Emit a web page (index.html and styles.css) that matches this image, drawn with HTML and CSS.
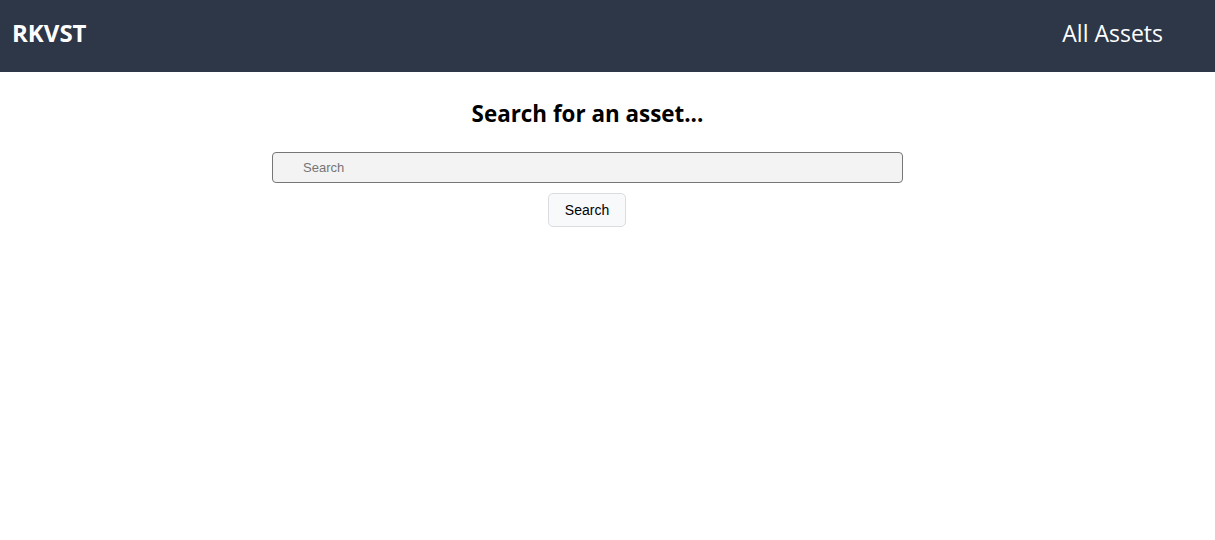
FILE: index.html
```html
<!DOCTYPE html>
<html lang="en">
<head>
<meta charset="utf-8">
<title>RKVST</title>
<link rel="stylesheet" href="styles.css">
</head>
<body>
<header class="topbar">
  <div class="brand">RKVST</div>
  <nav class="nav"><a class="nav-link" href="#">All Assets</a></nav>
</header>
<main class="content">
  <h1 class="title">Search for an asset...</h1>
  <form class="search-form">
    <input class="search-input" type="text" placeholder="Search">
    <button class="search-button" type="button">Search</button>
  </form>
</main>
</body>
</html>
```
FILE: styles.css
```css
* { box-sizing: border-box; }
html, body { margin: 0; padding: 0; background: #ffffff; }
body { font-family: "Open Sans", "Noto Sans", sans-serif; }

.topbar {
  height: 72px;
  background: #2d3748;
  display: flex;
  align-items: center;
  justify-content: space-between;
  padding: 0 52px 7px 12px;
}
.brand {
  color: #ffffff;
  font-weight: 700;
  font-size: 24px;
}
.nav-link {
  color: #ffffff;
  text-decoration: none;
  font-size: 23px;
}

.content {
  display: flex;
  flex-direction: column;
  align-items: center;
  padding: 0 40px 0 0;
}
.title {
  margin: 27px 0 0;
  font-size: 22.4px;
  font-weight: 700;
  color: #000;
  line-height: 30px;
}
.search-form {
  display: flex;
  flex-direction: column;
  align-items: center;
  gap: 10px;
  margin-top: 23px;
}
.search-input {
  width: 631px;
  height: 31px;
  background: #f3f3f3;
  border: 1px solid #767676;
  border-radius: 4px;
  padding: 0 0 0 30px;
  font-family: "Liberation Sans", Arial, sans-serif;
  font-size: 13px;
  color: #333;
}
.search-input::placeholder { color: #757575; }
.search-button {
  width: 78px;
  height: 34px;
  background: #f8f9fa;
  border: 1px solid #dadce0;
  border-radius: 5px;
  font-family: "Liberation Sans", Arial, sans-serif;
  font-size: 14px;
  color: #000;
  margin-right: 1px;
}
```
